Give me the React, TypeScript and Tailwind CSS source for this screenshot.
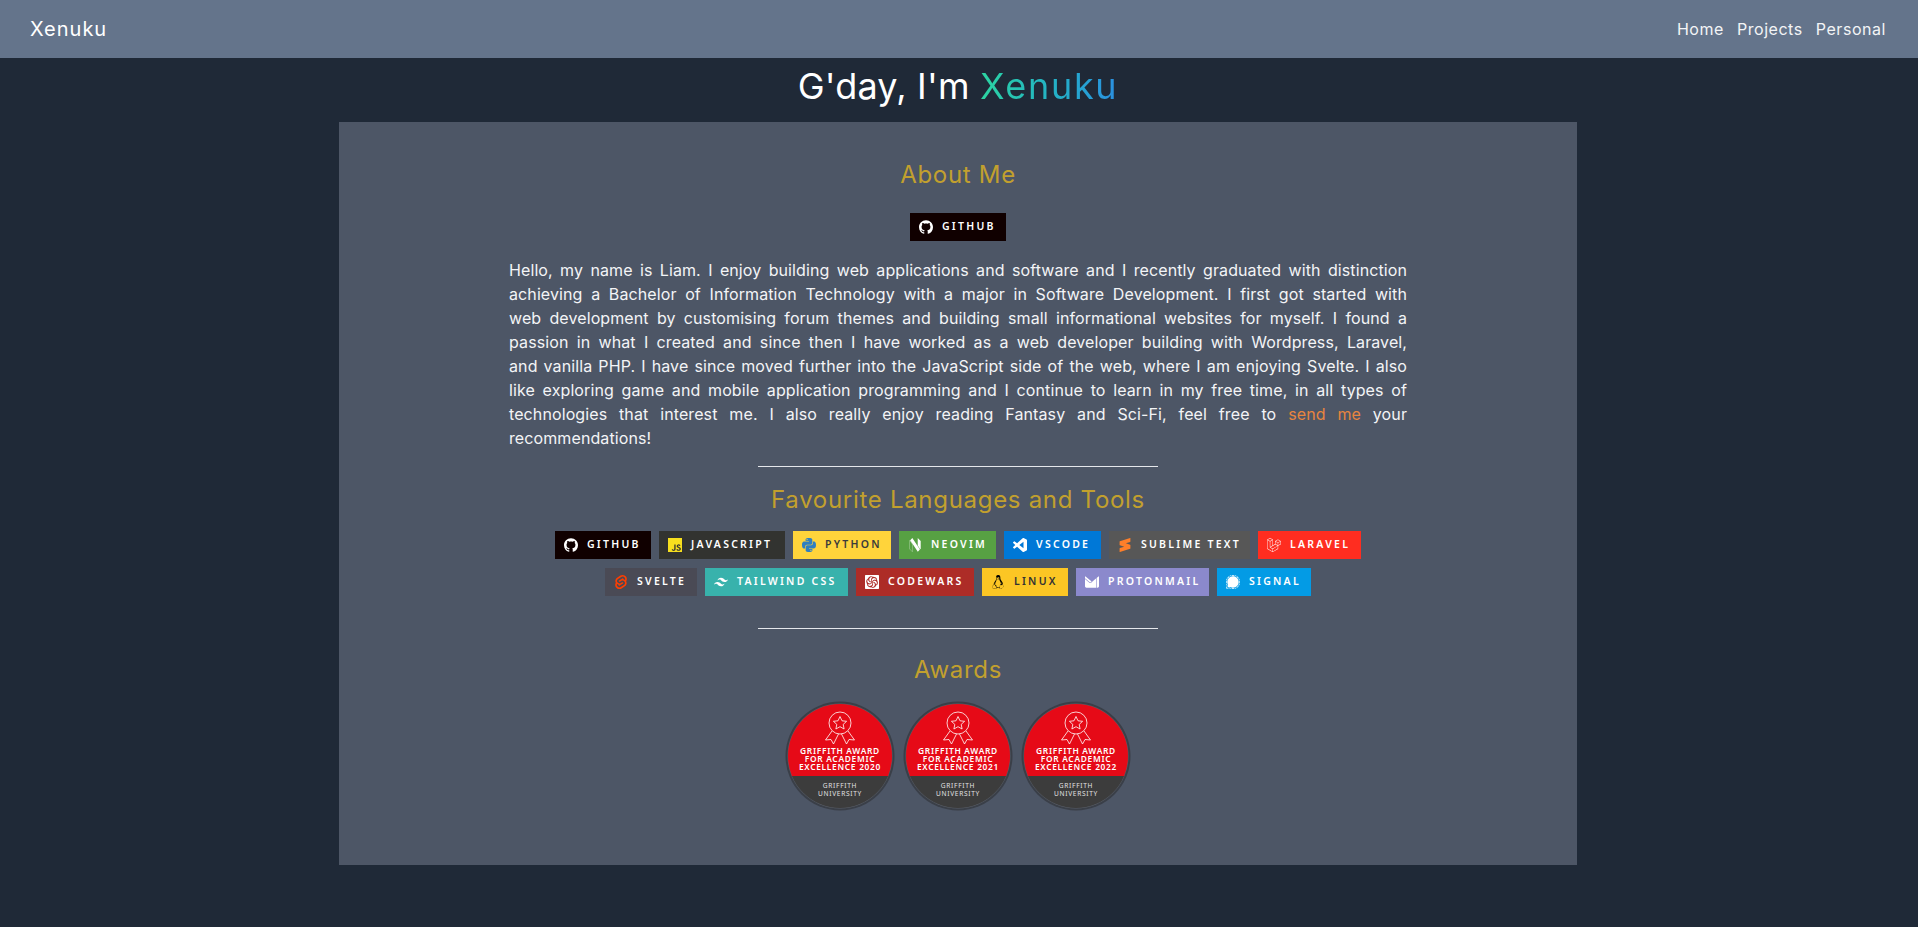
import React from "react";
import {
  SiGithub,
  SiJavascript,
  SiNeovim,
  SiSublimetext,
  SiLaravel,
  SiSvelte,
  SiTailwindcss,
  SiCodewars,
  SiLinux,
  SiProtonmail,
  SiSignal,
} from "react-icons/si";

const VsCodeIcon = ({ className }: { className?: string }) => (
  <svg viewBox="0 0 24 24" className={className} fill="currentColor">
    <path d="M23.15 2.587L18.21.21a1.494 1.494 0 0 0-1.705.29l-9.46 8.63-4.12-3.128a.999.999 0 0 0-1.276.057L.327 7.261A1 1 0 0 0 .326 8.74L3.899 12 .326 15.26a1 1 0 0 0 .001 1.479L1.65 17.94a.999.999 0 0 0 1.276.057l4.12-3.128 9.46 8.63a1.492 1.492 0 0 0 1.704.29l4.942-2.377A1.5 1.5 0 0 0 24 20.06V3.939a1.5 1.5 0 0 0-.85-1.352zm-5.146 14.861L10.826 12l7.178-5.448v10.896z" />
  </svg>
);

const PythonIcon = ({ className }: { className?: string }) => (
  <svg viewBox="0 0 24 24" className={className}>
    <path
      fill="#2f7fc1"
      d="M11.900 0C5.800 0 6.200 2.600 6.200 2.600v2.700H12v.8H3.900S0 5.700 0 11.900c0 6.200 3.400 6 3.400 6h2v-2.900s-.1-3.400 3.400-3.400h5.700s3.200.1 3.200-3.100V3.200S18.300 0 11.900 0zM8.700 1.900a1 1 0 1 1 0 2.100 1 1 0 0 1 0-2.100z"
    />
    <path
      fill="#2f7fc1"
      d="M12.100 24c6.100 0 5.700-2.600 5.700-2.600v-2.700H12v-.8h8.100s3.900.4 3.900-5.800c0-6.200-3.400-6-3.400-6h-2v2.900s.1 3.400-3.400 3.400H9.500s-3.200-.1-3.200 3.100v5.300S5.700 24 12.100 24zm3.200-1.900a1 1 0 1 1 0-2.100 1 1 0 0 1 0 2.100z"
    />
  </svg>
);

const badges = [
  [
    { label: "GitHub", icon: SiGithub, box: "w-[96px] bg-[#100000] text-white", iconColor: "text-white" },
    { label: "JavaScript", icon: SiJavascript, box: "w-[126px] bg-[#323330] text-white", iconColor: "text-[#f7df1e]" },
    { label: "Python", icon: PythonIcon, box: "w-[98px] bg-[#ffd43b] text-[#3b3b3b]", iconColor: "" },
    { label: "Neovim", icon: SiNeovim, box: "w-[97px] bg-[#57a143] text-white", iconColor: "text-white" },
    { label: "VSCode", icon: VsCodeIcon, box: "w-[97px] bg-[#0078d7] text-white", iconColor: "text-white" },
    { label: "Sublime Text", icon: SiSublimetext, box: "w-[141px] bg-[#575757] text-white", iconColor: "text-[#ff7f2a]" },
    { label: "Laravel", icon: SiLaravel, box: "w-[103px] bg-[#ff2d20] text-white", iconColor: "text-white" },
  ],
  [
    { label: "Svelte", icon: SiSvelte, box: "w-[92px] bg-[#4a4a55] text-white", iconColor: "text-[#ff3e00]" },
    { label: "Tailwind CSS", icon: SiTailwindcss, box: "w-[143px] bg-[#38b2ac] text-white", iconColor: "text-white" },
    { label: "Codewars", icon: SiCodewars, box: "w-[118px] bg-[#ad2c27] text-white", iconColor: "text-white" },
    { label: "Linux", icon: SiLinux, box: "w-[86px] bg-[#fcc624] text-[#333]", iconColor: "text-black" },
    { label: "ProtonMail", icon: SiProtonmail, box: "w-[133px] bg-[#8b89cc] text-white", iconColor: "text-white" },
    { label: "Signal", icon: SiSignal, box: "w-[94px] bg-[#039be5] text-white", iconColor: "text-white" },
  ],
];

const Badge = ({ label, icon: Icon, box, iconColor }: any) => (
  <div className={`flex h-[28px] items-center gap-[9px] pl-[9px] ${box}`}>
    <Icon className={`h-[14px] w-[14px] shrink-0 ${iconColor}`} />
    <span className="whitespace-nowrap font-['Noto_Sans',sans-serif] text-[10.5px] font-semibold uppercase tracking-[2.25px]">
      {label}
    </span>
  </div>
);

const AwardBadge = ({ year }: { year: string }) => {
  const clipId = `award-clip-${year}`;
  return (
    <svg viewBox="0 0 110 110" className="h-[110px] w-[110px]">
      <defs>
        <clipPath id={clipId}>
          <circle cx="55" cy="55" r="52" />
        </clipPath>
      </defs>
      <circle cx="55" cy="55" r="54.5" fill="#3a3f48" />
      <circle cx="55" cy="55" r="52.5" fill="#5a5f68" />
      <g clipPath={`url(#${clipId})`}>
        <rect x="0" y="0" width="110" height="76" fill="#e60a17" />
        <rect x="0" y="75" width="110" height="35" fill="#3c3c3c" />
      </g>
      {/* rosette */}
      <g fill="none" stroke="#fff" strokeWidth="0.8" strokeLinejoin="round">
        <circle cx="55" cy="22" r="11" />
        <path d="M55 15.500l2 4.300 4.600.5-3.400 3.100.9 4.600-4.100-2.300-4.100 2.300.9-4.600-3.400-3.100 4.600-.5z" />
        <path d="M47 30l-6.500 9 5.500-.5 2.500 4.500 5-10" />
        <path d="M63 30l6.500 9-5.500-.5-2.500 4.500-5-10" />
      </g>
      <g
        fill="#fff"
        fontFamily="'Noto Sans', sans-serif"
        fontWeight="600"
        fontSize="8.400"
        textAnchor="middle"
        letterSpacing="0.7"
      >
        <text x="55" y="53">GRIFFITH AWARD</text>
        <text x="55" y="61">FOR ACADEMIC</text>
        <text x="55" y="69">EXCELLENCE {year}</text>
      </g>
      <g
        fill="#e2e2e2"
        fontFamily="'Noto Sans', sans-serif"
        fontSize="6.600"
        textAnchor="middle"
        letterSpacing="0.7"
      >
        <text x="55" y="87">GRIFFITH</text>
        <text x="55" y="94.500">UNIVERSITY</text>
      </g>
    </svg>
  );
};

const aboutLines = [
  "Hello, my name is Liam. I enjoy building web applications and software and I recently graduated with distinction",
  "achieving a Bachelor of Information Technology with a major in Software Development. I first got started with",
  "web development by customising forum themes and building small informational websites for myself. I found a",
  "passion in what I created and since then I have worked as a web developer building with Wordpress, Laravel,",
  "and vanilla PHP. I have since moved further into the JavaScript side of the web, where I am enjoying Svelte. I also",
  "like exploring game and mobile application programming and I continue to learn in my free time, in all types of",
];

export default function App() {
  return (
    <div className="min-h-screen bg-[#1f2937] font-['Inter',sans-serif] text-white">
      {/* Navbar */}
      <nav className="flex h-[58px] items-center justify-between bg-[#64748b] pl-[30px] pr-[32px]">
        <span className="text-[20px] tracking-[1px]">Xenuku</span>
        <div className="flex gap-[13px] text-[16px] tracking-[0.55px] text-gray-100">
          <a href="#">Home</a>
          <a href="#">Projects</a>
          <a href="#">Personal</a>
        </div>
      </nav>

      <div className="pr-[2px]">
        <h1 className="mb-[6px] flex h-[58px] items-center justify-center pb-[3px] text-[36px] tracking-[0.2px]">
          G'day, I'm&nbsp;
          <span className="bg-gradient-to-r from-[#2dd4a0] to-[#2b8fe0] bg-clip-text tracking-[1.7px] text-transparent">
            Xenuku
          </span>
        </h1>

        {/* Content card */}
        <main className="mx-auto flex h-[743px] w-[1238px] flex-col items-center bg-[#4d5666] pt-[37px]">
          <h2 className="text-[24px] leading-[32px] tracking-[0.7px] text-[#c2a02e]">About Me</h2>
          <div className="mt-[22px]">
            <Badge {...badges[0][0]} />
          </div>
          <div className="mt-[17px] w-[898px] text-justify text-[16px] leading-[24px] tracking-[0.1px] text-gray-100">
            {aboutLines.map((line) => (
              <p key={line} className="[text-align-last:justify]">
                {line}
              </p>
            ))}
            <p className="[text-align-last:justify]">
              technologies that interest me. I also really enjoy reading Fantasy and Sci-Fi, feel free to{" "}
              <a href="#" className="text-[#e8853f]">
                send me
              </a>{" "}
              your
            </p>
            <p>recommendations!</p>
          </div>
          <hr className="mt-[16px] w-[400px] border-t border-gray-200" />
          <h2 className="mt-[17px] text-[24px] leading-[32px] tracking-[0.7px] text-[#c2a02e]">
            Favourite Languages and Tools
          </h2>
          <div className="mt-[15px] flex flex-col items-center gap-[9px]">
            {badges.map((row, i) => (
              <div key={i} className="flex gap-[8px]">
                {row.map((b) => (
                  <Badge key={b.label} {...b} />
                ))}
              </div>
            ))}
          </div>
          <hr className="mt-[32px] w-[400px] border-t border-gray-200" />
          <h2 className="mt-[25px] text-[24px] leading-[32px] tracking-[0.7px] text-[#c2a02e]">Awards</h2>
          <div className="mt-[15px] flex gap-[8px]">
            <AwardBadge year="2020" />
            <AwardBadge year="2021" />
            <AwardBadge year="2022" />
          </div>
        </main>
      </div>
    </div>
  );
}
